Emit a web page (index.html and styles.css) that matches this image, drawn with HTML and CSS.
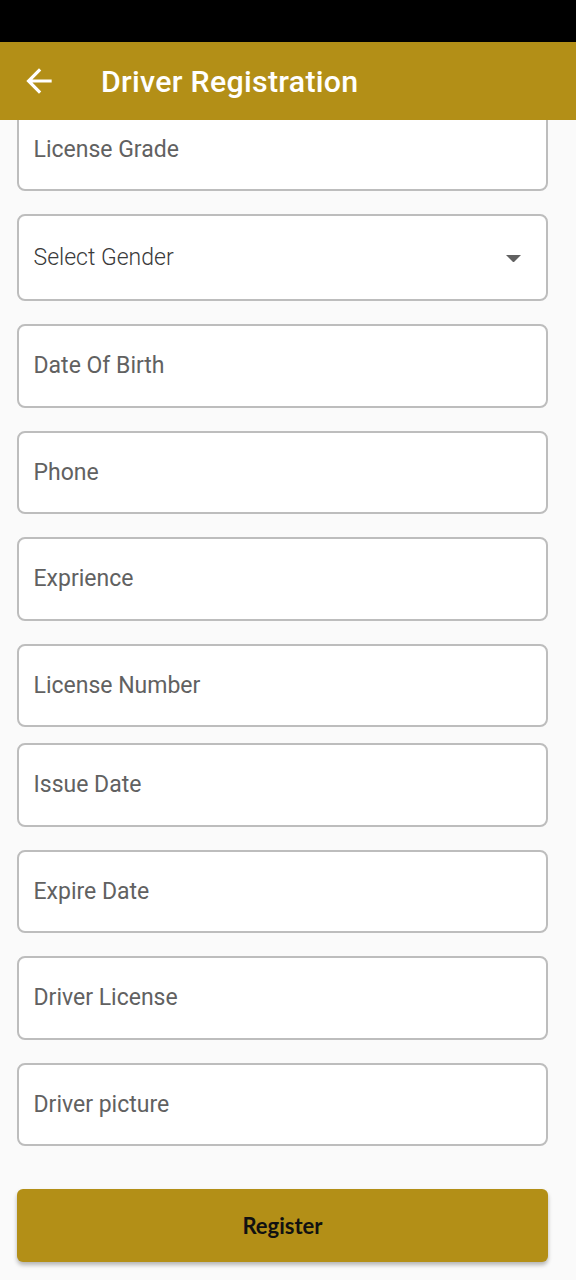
FILE: index.html
```html
<!DOCTYPE html>
<html>
<head>
<meta charset="utf-8">
<link rel="stylesheet" href="styles.css">
</head>
<body>
<div class="status"></div>
<header class="appbar">
  <svg class="back" viewBox="0 0 24 24" width="38" height="38"><path d="M20 11H7.83l5.59-5.59L12 4l-8 8 8 8 1.41-1.41L7.83 13H20v-2z" fill="#fff"/></svg>
  <h1 class="title">Driver Registration</h1>
</header>
<main class="form">
  <div class="field first">License Grade</div>
  <div class="field select"><span>Select Gender</span><svg class="drop" viewBox="7 10 10 5" width="15" height="7.5"><path d="M7 10l5 5 5-5z" fill="#616161"/></svg></div>
  <div class="field">Date Of Birth</div>
  <div class="field">Phone</div>
  <div class="field">Exprience</div>
  <div class="field">License Number</div>
  <div class="field tight">Issue Date</div>
  <div class="field">Expire Date</div>
  <div class="field">Driver License</div>
  <div class="field">Driver picture</div>
  <button class="register">Register</button>
</main>
</body>
</html>
```
FILE: styles.css
```css
html, body {
  margin: 0;
  padding: 0;
  background: #fafafa;
  width: 576px;
  height: 1280px;
  overflow: hidden;
  font-family: Roboto, "Liberation Sans", sans-serif;
}
.status {
  height: 42px;
  background: #000;
}
.appbar {
  position: relative;
  z-index: 2;
  height: 78px;
  background: #b38f17;
  display: flex;
  align-items: center;
}
.back {
  margin-left: 20px;
  display: block;
}
.title {
  margin: 0 0 0 43px;
  color: #fff;
  font-size: 30.3px;
  font-weight: 500;
  letter-spacing: 0.3px;
}
.form {
  display: flex;
  flex-direction: column;
  padding-left: 17px;
  width: 531px;
}
.field {
  box-sizing: border-box;
  height: 83.5px;
  margin-top: 23px;
  background: #fff;
  border: 2.5px solid #bdbdbd;
  border-radius: 8px;
  display: flex;
  align-items: center;
  padding-left: 14.5px;
  padding-right: 25px;
  font-size: 23px;
  color: #616161;
}
.field.first {
  margin-top: -12.5px;
}
.field.select {
  height: 87px;
  justify-content: space-between;
  color: #3a3a3a;
  font-weight: 300;
}
.field.tight {
  margin-top: 16px;
}
.drop {
  display: block;
  margin-top: 2px;
}
.register {
  margin-top: 43px;
  height: 73px;
  border: none;
  border-radius: 6px;
  background: #b38f17;
  box-shadow: 0 3px 4px rgba(0, 0, 0, 0.28);
  font-family: Lato, "Open Sans", sans-serif;
  font-weight: 700;
  font-size: 22px;
  color: #111;
  padding: 0;
}
```
